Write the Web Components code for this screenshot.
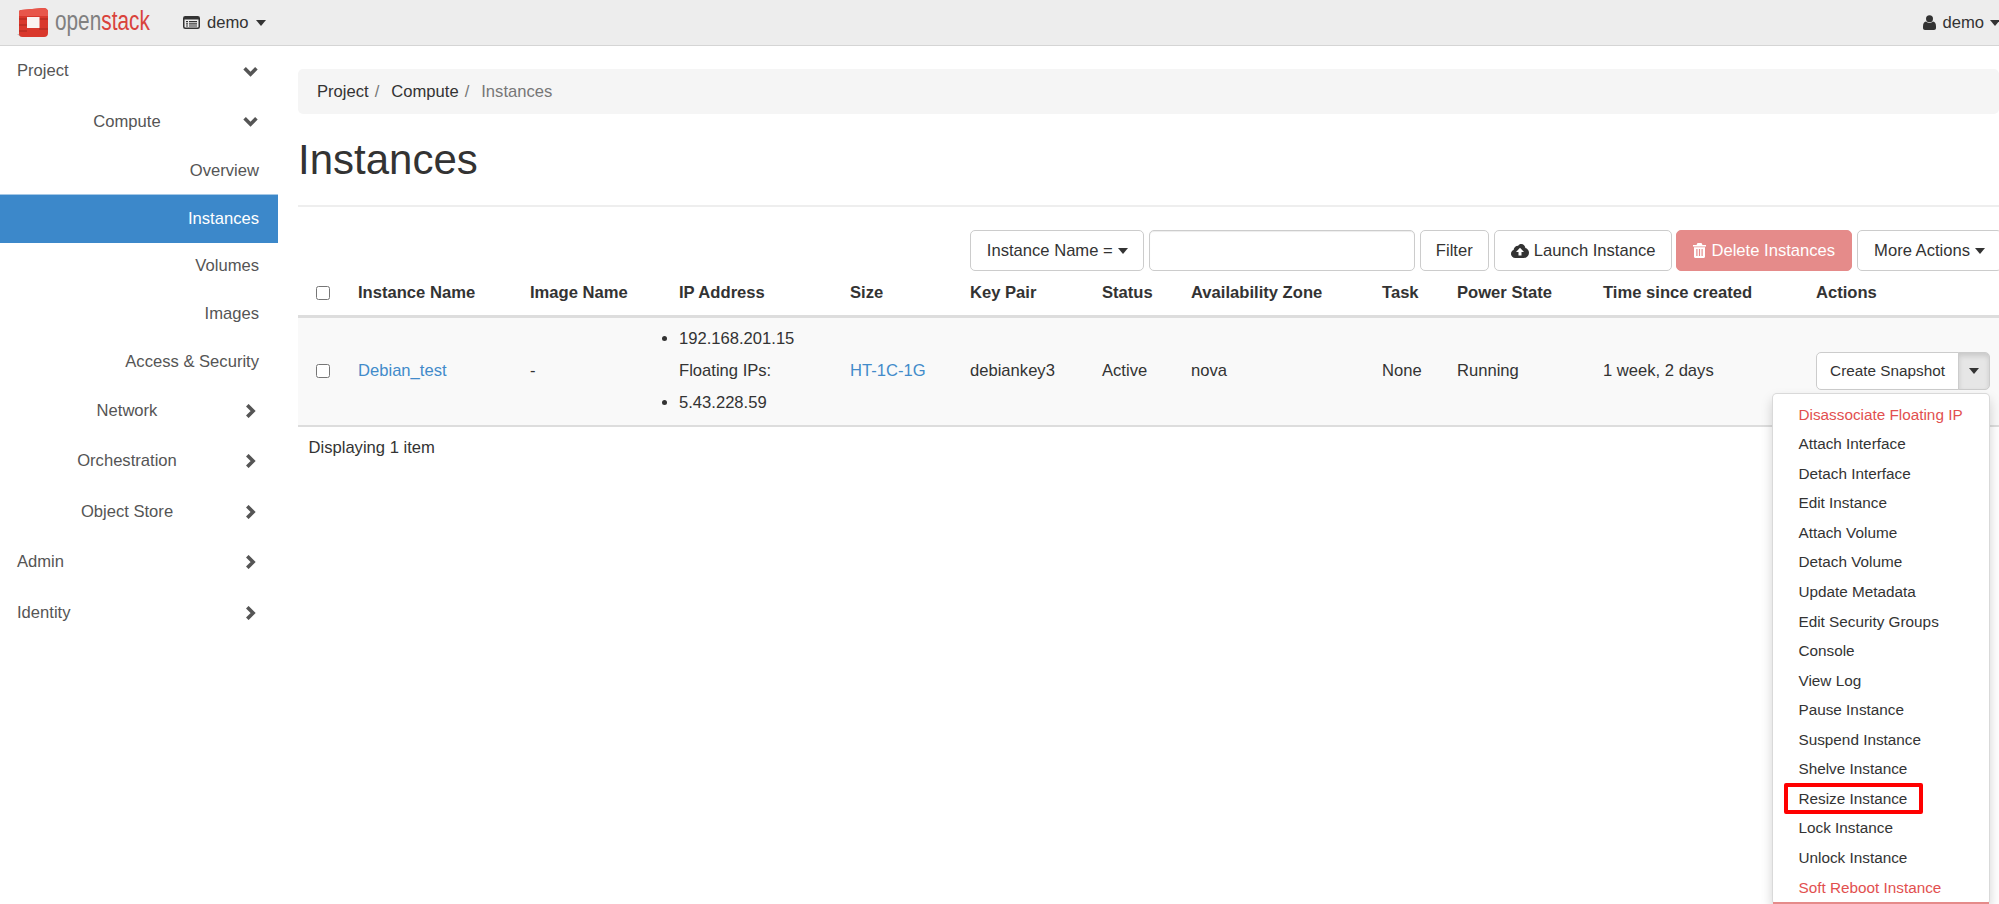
<!DOCTYPE html>
<html lang="en">
<head>
<meta charset="utf-8">
<title>Instances</title>
<style>
html, body { margin: 0; height: 904px; overflow: hidden; background: #fff; }
body { font: 16.6px/1.43 "Liberation Sans", Arial, sans-serif; color: #333; }
</style>
</head>
<body>
<os-app>
    <os-navbar slot="top" project="demo" user="demo"></os-navbar>
    <os-sidebar slot="side">
        <os-nav-item level="1" chevron="down">Project</os-nav-item>
        <os-nav-item level="2" chevron="down">Compute</os-nav-item>
        <os-nav-item level="3">Overview</os-nav-item>
        <os-nav-item level="3" active>Instances</os-nav-item>
        <os-nav-item level="3">Volumes</os-nav-item>
        <os-nav-item level="3">Images</os-nav-item>
        <os-nav-item level="3">Access &amp; Security</os-nav-item>
        <os-nav-item level="2" chevron="right">Network</os-nav-item>
        <os-nav-item level="2" chevron="right">Orchestration</os-nav-item>
        <os-nav-item level="2" chevron="right">Object Store</os-nav-item>
        <os-nav-item level="1" chevron="right">Admin</os-nav-item>
        <os-nav-item level="1" chevron="right">Identity</os-nav-item>
    </os-sidebar>
    <os-breadcrumb trail="Project,Compute" current="Instances"></os-breadcrumb>
    <os-page-title>Instances</os-page-title>
    <os-toolbar></os-toolbar>
    <os-instances-table></os-instances-table>
</os-app>

<script>
const ICONS = {
    caret: '<svg width="10" height="6" viewBox="0 0 10 6"><path d="M0 0h10L5 6z" fill="currentColor"/></svg>',
    listAlt: '<svg width="17" height="13" viewBox="0 0 17 13"><rect x=".75" y=".75" width="15.5" height="11.5" rx="1.5" fill="none" stroke="currentColor" stroke-width="1.5"/><path d="M1 1h15v2.5H1zM3 5h2v1.2H3zM6 5h8v1.2H6zM3 7.2h2v1.2H3zM6 7.2h8v1.2H6zM3 9.4h2v1.2H3zM6 9.4h8v1.2H6z" fill="currentColor"/></svg>',
    user: '<svg width="13" height="15" viewBox="0 0 13 15"><circle cx="6.5" cy="3.7" r="3.5" fill="currentColor"/><path d="M3 6.6c.9.8 2.1 1.3 3.5 1.3s2.6-.5 3.5-1.3c2 .2 3 1.9 3 4.9v1.4c0 1.2-.8 2-2 2H2c-1.200 0-2-.8-2-2v-1.400c0-3 1-4.700 3-4.900z" fill="currentColor"/></svg>',
    cloud: '<svg width="18" height="14" viewBox="0 0 18 14"><path d="M4.300 14C1.900 14 0 12.200 0 9.900c0-1.700 1-3.200 2.600-3.800C2.700 3.600 4.700 1.700 7.200 1.700c.5-1 1.800-1.700 3-1.700 2.300 0 4 1.800 4.100 4.100 2.100.5 3.700 2.400 3.700 4.700C18 11.700 15.700 14 12.800 14z" fill="currentColor"/><path d="M9 3.800l4 4.200h-2.500v3.500h-3V8H5z" fill="#fff"/></svg>',
    trash: '<svg width="13" height="15" viewBox="0 0 13 15"><path fill-rule="evenodd" d="M4.500 0h4l1 2H13v1.500H0V2h3.500zM1 4.200h11V13.500c0 .9-.6 1.500-1.500 1.500h-8C1.600 15 1 14.400 1 13.500zM3.300 6v7h1.200V6zM5.900 6v7h1.200V6zM8.500 6v7h1.200V6z" fill="currentColor"/></svg>',
    down: '<svg width="15" height="11" viewBox="0 0 15 11"><path d="M1.600 2.300l5.900 5.900 5.900-5.900" fill="none" stroke="currentColor" stroke-width="3.600"/></svg>',
    right: '<svg width="11" height="14" viewBox="0 0 11 14"><path d="M2.300 1.200l5.800 5.800-5.800 5.800" fill="none" stroke="currentColor" stroke-width="3.600"/></svg>'
};

class OsApp extends HTMLElement {
    constructor() {
        super();
        this.shadowDOM = this.attachShadow({ mode: 'open' });
    }

    connectedCallback() {
        this.shadowDOM.innerHTML = `
        <style>
        :host { display: grid; grid-template: 46px 1fr / 278px 1fr; height: 904px; }
        .top { grid-column: 1 / 3; }
        main { padding-left: 20px; min-width: 0; }
        </style>
        <div class="top"><slot name="top"></slot></div>
        <div><slot name="side"></slot></div>
        <main><slot></slot></main>
        `;
    }
}

class OsNavbar extends HTMLElement {
    constructor() {
        super();
        this.shadowDOM = this.attachShadow({ mode: 'open' });
    }

    connectedCallback() {
        this.shadowDOM.innerHTML = `
        <style>
        :host {
            display: flex;
            align-items: center;
            box-sizing: border-box;
            height: 46px;
            padding-left: 16px;
            background: #ededed;
            border-bottom: 1px solid #d5d5d5;
        }
        .logo { display: flex; align-items: center; gap: 5px; width: 167px; }
        .word {
            display: inline-block;
            font: 27px/30px "Liberation Sans", sans-serif;
            color: #808080;
            margin-top: -4px;
            transform: scaleX(.77);
            transform-origin: left center;
        }
        .word b { font-weight: normal; color: #d9433c; }
        .menu { display: flex; align-items: center; gap: 7px; color: #333; }
        .menu:last-child { margin-left: auto; margin-right: -1px; gap: 6px; }
        .menu svg { display: block; }
        </style>
        <div class="logo">
            <svg width="34" height="32" viewBox="0 0 34 32">
                <path d="M1 27l4 3h24l-2-2z" fill="#bbb"/>
                <path d="M3 5q0-2 2-2l22-2q5 0 5 4v21q0 4-4 4H7q-4 0-4-3z" fill="#d9382c"/>
                <path d="M3 5q0-2 2-2l22-2q5 0 5 4v4H3z" fill="#e8564a"/>
                <path d="M3 12h8M3 18h8M3 24h8M23 12h9M23 22h9" stroke="#a8261d" stroke-width="1"/>
                <rect x="11" y="10" width="12.500" height="11" fill="#fbf3f1"/>
            </svg>
            <span class="word">open<b>stack</b></span>
        </div>
        <div class="menu">${ICONS.listAlt}<span>${this.getAttribute('project')}</span>${ICONS.caret}</div>
        <div class="menu">${ICONS.user}<span>${this.getAttribute('user')}</span>${ICONS.caret}</div>
        `;
    }
}

class OsSidebar extends HTMLElement {
    constructor() {
        super();
        this.shadowDOM = this.attachShadow({ mode: 'open' });
    }

    connectedCallback() {
        this.shadowDOM.innerHTML = `
        <style>
        :host { display: block; width: 278px; }
        </style>
        <slot></slot>
        `;
    }
}

class OsNavItem extends HTMLElement {
    constructor() {
        super();
        this.shadowDOM = this.attachShadow({ mode: 'open' });
    }

    connectedCallback() {
        const chevron = this.getAttribute('chevron');
        this.shadowDOM.innerHTML = `
        <style>
        :host { display: flex; align-items: center; box-sizing: border-box; color: #555; }
        :host([level="1"]), :host([level="2"]) { height: 50.4px; padding-right: 20px; }
        :host([level="3"]) { height: 47.8px; justify-content: flex-end; padding-right: 19px; }
        :host([level="1"]) { padding-left: 17px; }
        :host([level="2"]) { padding-left: 11px; }
        :host([active]) {
            height: 49.8px;
            margin: -1px 0;
            background: #3c88ca;
            color: #fff;
            border-top: 1px solid #a5c8e6;
        }
        .label { flex: 0 1 auto; }
        :host([level="1"]) .label, :host([level="2"]) .label { flex: 1; }
        :host([level="2"]) .label { text-align: center; }
        .chev { width: 15px; display: flex; justify-content: center; }
        svg { display: block; }
        </style>
        <span class="label"><slot></slot></span>
        ${chevron ? `<span class="chev">${ICONS[chevron]}</span>` : ''}
        `;
    }
}

class OsBreadcrumb extends HTMLElement {
    constructor() {
        super();
        this.shadowDOM = this.attachShadow({ mode: 'open' });
    }

    connectedCallback() {
        const trail = this.getAttribute('trail').split(',');
        this.shadowDOM.innerHTML = `
        <style>
        :host {
            display: flex;
            align-items: center;
            box-sizing: border-box;
            height: 45px;
            margin-top: 23px;
            padding-left: 19px;
            background: #f5f5f5;
            border-radius: 5px;
        }
        .crumb { color: #333; }
        .sep { color: #777; padding: 0 12px 0 6px; }
        .now { color: #777; }
        </style>
        ${trail.map(t => `<span class="crumb">${t}</span><span class="sep">/</span>`).join('')}
        <span class="now">${this.getAttribute('current')}</span>
        `;
    }
}

class OsPageTitle extends HTMLElement {
    constructor() {
        super();
        this.shadowDOM = this.attachShadow({ mode: 'open' });
    }

    connectedCallback() {
        this.shadowDOM.innerHTML = `
        <style>
        :host {
            display: block;
            height: 91px;
            border-bottom: 2px solid #eee;
            font-size: 42px;
            line-height: 91px;
            color: #333;
        }
        </style>
        <slot></slot>
        `;
    }
}

class OsButton extends HTMLElement {
    constructor() {
        super();
        this.shadowDOM = this.attachShadow({ mode: 'open' });
    }

    connectedCallback() {
        this.shadowDOM.innerHTML = `
        <style>
        :host {
            display: inline-flex;
            align-items: center;
            justify-content: center;
            box-sizing: border-box;
            height: 41px;
            padding: 0 16px;
            gap: 5px;
            background: #fff;
            color: #333;
            border: 1px solid #ccc;
            border-radius: 5px;
            white-space: nowrap;
        }
        :host([variant="danger"]) { background: #e58b8a; border-color: #e58b8a; color: #fff; }
        :host([small]) { height: 38px; font-size: 15.300px; }
        </style>
        <slot></slot>
        `;
    }
}

class OsToolbar extends HTMLElement {
    constructor() {
        super();
        this.shadowDOM = this.attachShadow({ mode: 'open' });
    }

    connectedCallback() {
        this.shadowDOM.innerHTML = `
        <style>
        :host { display: flex; justify-content: flex-end; gap: 5px; margin: 23px -3px 0 0; }
        input {
            box-sizing: border-box;
            width: 266px;
            height: 41px;
            border: 1px solid #ccc;
            border-radius: 5px;
            background: #fff;
            box-shadow: inset 0 1px 1px rgba(0, 0, 0, .075);
        }
        svg { display: block; }
        .select { width: 174px; padding: 0 0 0 16px; justify-content: flex-start; }
        .filter { padding: 0 15px; }
        .launch { margin-right: -1px; }
        </style>
        <os-button class="select">Instance Name =${ICONS.caret}</os-button>
        <input type="text" aria-label="Filter">
        <os-button class="filter">Filter</os-button>
        <os-button class="launch">${ICONS.cloud}Launch Instance</os-button>
        <os-button variant="danger">${ICONS.trash}Delete Instances</os-button>
        <os-button>More Actions ${ICONS.caret}</os-button>
        `;
    }
}

class OsMenuItem extends HTMLElement {
    constructor() {
        super();
        this.shadowDOM = this.attachShadow({ mode: 'open' });
    }

    connectedCallback() {
        this.shadowDOM.innerHTML = `
        <style>
        :host {
            display: block;
            position: relative;
            height: 29.560px;
            line-height: 29.560px;
            padding-left: 25.500px;
            color: #333;
            white-space: nowrap;
        }
        :host([danger]) { color: #e2504f; }
        /* the red marker drawn over the screenshot */
        :host([marked])::after {
            content: "";
            position: absolute;
            left: 11px;
            top: -0.500px;
            width: 139px;
            height: 31px;
            box-sizing: border-box;
            border: 4px solid #f00;
            border-radius: 2px;
        }
        </style>
        <slot></slot>
        `;
    }
}

class OsRowActions extends HTMLElement {
    constructor() {
        super();
        this.shadowDOM = this.attachShadow({ mode: 'open' });
    }

    connectedCallback() {
        const items = ['Disassociate Floating IP:danger', 'Attach Interface', 'Detach Interface', 'Edit Instance',
            'Attach Volume', 'Detach Volume', 'Update Metadata', 'Edit Security Groups', 'Console', 'View Log',
            'Pause Instance', 'Suspend Instance', 'Shelve Instance', 'Resize Instance:marked', 'Lock Instance',
            'Unlock Instance', 'Soft Reboot Instance:danger'];
        this.shadowDOM.innerHTML = `
        <style>
        :host { display: inline-flex; position: relative; vertical-align: middle; font-size: 15.300px; }
        .main { border-radius: 5px 0 0 5px; width: 143px; padding: 0; }
        .toggle {
            width: 32px;
            padding: 0;
            margin-left: -1px;
            border-radius: 0 5px 5px 0;
            background: #e6e6e6;
            box-shadow: inset 0 3px 5px rgba(0, 0, 0, .125);
        }
        .menu {
            position: absolute;
            top: 41px;
            right: 0;
            width: 218px;
            box-sizing: border-box;
            padding: 6px 0 0;
            background: #fff;
            border: 1px solid rgba(0, 0, 0, .15);
            border-radius: 5px;
            box-shadow: 0 6px 12px rgba(0, 0, 0, .175);
            z-index: 5;
        }
        .edge { height: 2px; background: #e58b8a; }
        svg { display: block; }
        </style>
        <os-button small class="main">Create Snapshot</os-button>
        <os-button small class="toggle">${ICONS.caret}</os-button>
        <div class="menu">
            ${items.map(i => {
                const [text, flag] = i.split(':');
                return `<os-menu-item ${flag || ''}>${text}</os-menu-item>`;
            }).join('')}
            <div class="edge"></div>
        </div>
        `;
    }
}

class OsInstancesTable extends HTMLElement {
    constructor() {
        super();
        this.shadowDOM = this.attachShadow({ mode: 'open' });
    }

    connectedCallback() {
        const heads = ['Instance Name', 'Image Name', 'IP Address', 'Size', 'Key Pair', 'Status',
            'Availability Zone', 'Task', 'Power State', 'Time since created', 'Actions'];
        const widths = [50, 172, 149, 171, 120, 132, 89, 191, 75, 146, 213, 193];
        this.shadowDOM.innerHTML = `
        <style>
        :host { display: block; }
        table { border-collapse: collapse; table-layout: fixed; width: 1701px; }
        th, td { padding: 0 0 0 10px; text-align: left; vertical-align: middle; }
        th { height: 44px; font-weight: bold; border-bottom: 3px solid #ddd; color: #333; }
        tbody tr { background: #f9f9f9; }
        td { height: 109px; padding-bottom: 1px; box-sizing: border-box; border-bottom: 2px solid #ddd; }
        th:first-child, td:first-child { padding-left: 18px; }
        input { display: block; width: 14px; height: 14px; margin: 0; }
        a { color: #428bca; text-decoration: none; }
        ul { margin: 0; padding: 0; list-style-position: outside; line-height: 32px; }
        li.plain { list-style: none; }
        p { margin: 0; padding: 9.500px 0 0 10.500px; }
        </style>
        <table>
            <colgroup>${widths.map(w => `<col style="width:${w}px">`).join('')}</colgroup>
            <thead>
                <tr>
                    <th><input type="checkbox" aria-label="Select all"></th>
                    ${heads.map(h => `<th>${h}</th>`).join('')}
                </tr>
            </thead>
            <tbody>
                <tr>
                    <td><input type="checkbox" aria-label="Select row"></td>
                    <td><a>Debian_test</a></td>
                    <td>-</td>
                    <td><ul><li>192.168.201.15</li><li class="plain">Floating IPs:</li><li>5.43.228.59</li></ul></td>
                    <td><a>HT-1C-1G</a></td>
                    <td>debiankey3</td>
                    <td>Active</td>
                    <td>nova</td>
                    <td>None</td>
                    <td>Running</td>
                    <td>1 week, 2 days</td>
                    <td><os-row-actions></os-row-actions></td>
                </tr>
            </tbody>
        </table>
        <p>Displaying 1 item</p>
        `;
    }
}

customElements.define('os-app', OsApp);
customElements.define('os-navbar', OsNavbar);
customElements.define('os-sidebar', OsSidebar);
customElements.define('os-nav-item', OsNavItem);
customElements.define('os-breadcrumb', OsBreadcrumb);
customElements.define('os-page-title', OsPageTitle);
customElements.define('os-button', OsButton);
customElements.define('os-toolbar', OsToolbar);
customElements.define('os-menu-item', OsMenuItem);
customElements.define('os-row-actions', OsRowActions);
customElements.define('os-instances-table', OsInstancesTable);
</script>
</body>
</html>
